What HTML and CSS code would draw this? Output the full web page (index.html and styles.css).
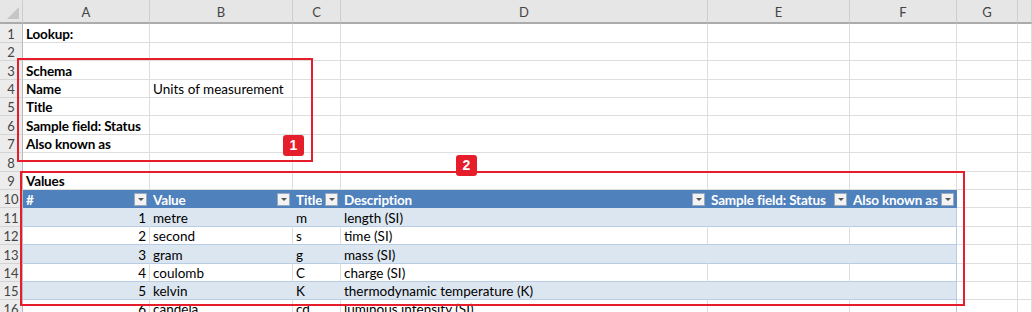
FILE: index.html
```html
<!DOCTYPE html>
<html lang="en">
<head>
    <meta charset="UTF-8">
    <meta name="viewport" content="width=device-width, initial-scale=1.0">
    <title>Lookup: Units of measurement</title>
    <link rel="stylesheet" href="styles.css">
</head>
<body>
    <div class="sheet">
        <!-- column letters -->
        <div class="row head">
            <div class="corner"></div>
            <div class="col">A</div><div class="col">B</div><div class="col">C</div><div class="col">D</div>
            <div class="col">E</div><div class="col">F</div><div class="col">G</div><div class="col"></div>
        </div>

        <div class="row tall">
            <div class="rh">1</div>
            <div class="c b">Lookup:</div><div class="c"></div><div class="c"></div><div class="c"></div>
            <div class="c"></div><div class="c"></div><div class="c"></div><div class="c"></div>
        </div>
        <div class="row">
            <div class="rh">2</div>
            <div class="c"></div><div class="c"></div><div class="c"></div><div class="c"></div>
            <div class="c"></div><div class="c"></div><div class="c"></div><div class="c"></div>
        </div>
        <div class="row tall">
            <div class="rh">3</div>
            <div class="c b">Schema</div><div class="c"></div><div class="c"></div><div class="c"></div>
            <div class="c"></div><div class="c"></div><div class="c"></div><div class="c"></div>
        </div>
        <div class="row">
            <div class="rh">4</div>
            <div class="c b">Name</div><div class="c">Units of measurement</div><div class="c"></div><div class="c"></div>
            <div class="c"></div><div class="c"></div><div class="c"></div><div class="c"></div>
        </div>
        <div class="row">
            <div class="rh">5</div>
            <div class="c b">Title</div><div class="c"></div><div class="c"></div><div class="c"></div>
            <div class="c"></div><div class="c"></div><div class="c"></div><div class="c"></div>
        </div>
        <div class="row tall">
            <div class="rh">6</div>
            <div class="c b">Sample field: Status</div><div class="c"></div><div class="c"></div><div class="c"></div>
            <div class="c"></div><div class="c"></div><div class="c"></div><div class="c"></div>
        </div>
        <div class="row">
            <div class="rh">7</div>
            <div class="c b">Also known as</div><div class="c"></div><div class="c"></div><div class="c"></div>
            <div class="c"></div><div class="c"></div><div class="c"></div><div class="c"></div>
        </div>
        <div class="row tall">
            <div class="rh">8</div>
            <div class="c"></div><div class="c"></div><div class="c"></div><div class="c"></div>
            <div class="c"></div><div class="c"></div><div class="c"></div><div class="c"></div>
        </div>
        <div class="row">
            <div class="rh">9</div>
            <div class="c b">Values</div><div class="c"></div><div class="c"></div><div class="c"></div>
            <div class="c"></div><div class="c"></div><div class="c"></div><div class="c"></div>
        </div>

        <!-- values table -->
        <div class="row">
            <div class="rh">10</div>
            <div class="th"><span>#</span><i class="dd"></i></div>
            <div class="th"><span>Value</span><i class="dd"></i></div>
            <div class="th"><span>Title</span><i class="dd"></i></div>
            <div class="th"><span>Description</span><i class="dd"></i></div>
            <div class="th"><span>Sample field: Status</span><i class="dd"></i></div>
            <div class="th last"><span>Also known as</span><i class="dd"></i></div>
            <div class="c"></div><div class="c"></div>
        </div>
        <div class="row tall band">
            <div class="rh">11</div>
            <div class="td num">1</div><div class="td">metre</div><div class="td">m</div><div class="td">length (SI)</div>
            <div class="td"></div><div class="td last"></div><div class="c"></div><div class="c"></div>
        </div>
        <div class="row">
            <div class="rh">12</div>
            <div class="td num">2</div><div class="td">second</div><div class="td">s</div><div class="td">time (SI)</div>
            <div class="td"></div><div class="td last"></div><div class="c"></div><div class="c"></div>
        </div>
        <div class="row tall band">
            <div class="rh">13</div>
            <div class="td num">3</div><div class="td">gram</div><div class="td">g</div><div class="td">mass (SI)</div>
            <div class="td"></div><div class="td last"></div><div class="c"></div><div class="c"></div>
        </div>
        <div class="row">
            <div class="rh">14</div>
            <div class="td num">4</div><div class="td">coulomb</div><div class="td">C</div><div class="td">charge (SI)</div>
            <div class="td"></div><div class="td last"></div><div class="c"></div><div class="c"></div>
        </div>
        <div class="row band">
            <div class="rh">15</div>
            <div class="td num">5</div><div class="td">kelvin</div><div class="td">K</div><div class="td">thermodynamic temperature (K)</div>
            <div class="td"></div><div class="td last"></div><div class="c"></div><div class="c"></div>
        </div>
        <div class="row">
            <div class="rh">16</div>
            <div class="td num">6</div><div class="td">candela</div><div class="td">cd</div><div class="td">luminous intensity (SI)</div>
            <div class="td"></div><div class="td last"></div><div class="c"></div><div class="c"></div>
        </div>

        <!-- callouts -->
        <div class="mark mark-schema"></div>
        <div class="badge badge-schema">1</div>
        <div class="mark mark-values"></div>
        <div class="badge badge-values">2</div>
    </div>
</body>
</html>
```

FILE: styles.css
```css
body {
    margin: 0;
    background: #fff;
    font-family: 'Lato', 'Liberation Sans', sans-serif;
    font-size: 13.5px;
    color: #000;
    overflow: hidden;
}

.sheet {
    position: relative;
    width: 1032px;
    height: 312px;
    overflow: hidden;
}

.row {
    display: grid;
    grid-template-columns: 23px 127px 143px 48px 367px 142px 107px 61px 1fr;
    height: 18px;
}

.row.tall {
    height: 19px;
}

.row > div {
    box-sizing: border-box;
    white-space: nowrap;
    overflow: hidden;
    display: flex;
    align-items: center;
    padding-top: 1px;
}

/* column letters */
.head {
    height: 24px;
    background: #e6e6e6;
}

.head > div {
    border-bottom: 2px solid #ababab;
}

.col {
    justify-content: center;
    color: #444;
    font-size: 13px;
    border-right: 1px solid #cdcdcd;
}

.corner {
    position: relative;
    border-right: 1px solid #cdcdcd;
}

.corner::after {
    content: "";
    position: absolute;
    right: 3px;
    bottom: 3px;
    border-left: 12px solid transparent;
    border-bottom: 12px solid #c6c6c6;
}

/* row numbers */
.rh {
    justify-content: center;
    background: #ececec;
    color: #444;
    font-size: 13px;
    border-right: 1px solid #b9b9b9;
    border-bottom: 1px solid #d4d4d4;
}

/* plain cells */
.c {
    padding-left: 3px;
    border-right: 1px solid #dedede;
    border-bottom: 1px solid #dedede;
}

.b {
    font-weight: bold;
    letter-spacing: -0.15px;
}

/* table header */
.th {
    background: #4f81bd;
    color: #fff;
    font-weight: bold;
    letter-spacing: -0.15px;
    padding: 0 3px;
    justify-content: space-between;
    gap: 3px;
}

.th span {
    overflow: hidden;
}

.dd {
    flex: none;
    position: relative;
    width: 13px;
    height: 13px;
    box-sizing: border-box;
    background: #f3f3f3;
    border: 1px solid #9aa9bb;
}

.dd::after {
    content: "";
    position: absolute;
    left: 3px;
    top: 4px;
    border-left: 3px solid transparent;
    border-right: 3px solid transparent;
    border-top: 3px solid #555;
}

/* table body */
.td {
    padding: 0 3px;
    border-right: 1px solid #dedede;
    border-bottom: 1px solid #b8cce4;
}

.band .td {
    background: #dce6f1;
    border-right-color: #dce6f1;
}

.td.last,
.band .td.last {
    border-right: 1px solid #b8cce4;
}

.num {
    justify-content: flex-end;
}

/* red callouts */
.mark {
    position: absolute;
    border: 2px solid #e61e2b;
    box-sizing: border-box;
}

.mark-schema {
    left: 17px;
    top: 58px;
    width: 296px;
    height: 104px;
}

.mark-values {
    left: 20px;
    top: 171px;
    width: 945px;
    height: 135px;
}

.badge {
    position: absolute;
    width: 21px;
    height: 21px;
    border-radius: 3px;
    background: #e61e2b;
    color: #fff;
    font-family: 'Liberation Sans', sans-serif;
    font-weight: bold;
    font-size: 14px;
    line-height: 21px;
    text-align: center;
}

.badge-schema {
    left: 283px;
    top: 135px;
}

.badge-values {
    left: 456px;
    top: 155px;
}
```
